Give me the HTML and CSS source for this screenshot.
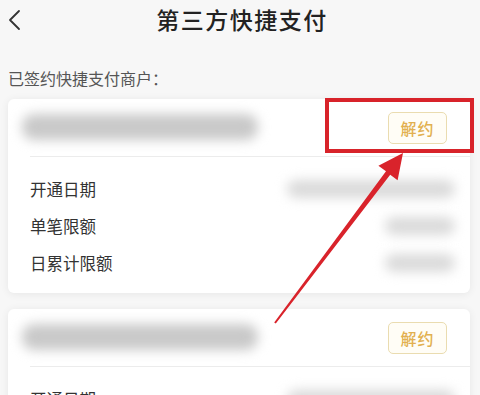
FILE: index.html
```html
<!DOCTYPE html>
<html lang="zh-CN">
<head>
    <meta charset="UTF-8">
    <meta name="viewport" content="width=device-width, initial-scale=1.0">
    <title>第三方快捷支付</title>
    <link rel="stylesheet" href="styles.css">
</head>
<body>
    <div class="page">
        <div class="nav">
            <svg class="back" width="14" height="22" viewBox="0 0 14 22">
                <polyline points="12,2 3,11 12,20" fill="none" stroke="#333" stroke-width="1.8" stroke-linecap="round" stroke-linejoin="round"/>
            </svg>
            <div class="title">第三方快捷支付</div>
        </div>

        <div class="subtitle">已签约快捷支付商户：</div>

        <div class="card">
            <div class="card-head">
                <div class="blur name"></div>
                <button class="btn-cancel">解约</button>
            </div>
            <div class="rows">
                <div class="row"><span>开通日期</span><div class="blur val wide"></div></div>
                <div class="row"><span>单笔限额</span><div class="blur val"></div></div>
                <div class="row"><span>日累计限额</span><div class="blur val"></div></div>
            </div>
        </div>

        <div class="card">
            <div class="card-head">
                <div class="blur name"></div>
                <button class="btn-cancel">解约</button>
            </div>
            <div class="rows">
                <div class="row"><span>开通日期</span><div class="blur val wide"></div></div>
                <div class="row"><span>单笔限额</span><div class="blur val"></div></div>
            </div>
        </div>

        <!-- annotation over the screenshot -->
        <div class="mark"></div>
        <svg class="arrow" width="480" height="395" viewBox="0 0 480 395">
            <polygon fill="#d9232b" points="274.2,322.4 386,171.2 378.4,165.8 403,153 397.6,180.2 390.2,174.8 275.8,323.6"/>
        </svg>
    </div>
</body>
</html>
```

FILE: styles.css
```css
body {
    margin: 0;
    background-color: #f7f7f7;
    font-family: "Noto Sans CJK SC", "Noto Sans", sans-serif;
    color: #333;
}

.page {
    position: relative;
    width: 480px;
    height: 395px;
    overflow: hidden;
}

.nav {
    position: relative;
    height: 38px;
    display: flex;
    align-items: center;
    justify-content: center;
}

.back {
    position: absolute;
    left: 7px;
    top: 9px;
}

.title {
    font-size: 23px;
    font-weight: 500;
    color: #222;
    letter-spacing: 1.5px;
    margin-left: 4px;
}

.subtitle {
    margin: 28px 0 0 8px;
    height: 25px;
    font-size: 16px;
    color: #555;
}

.card {
    margin: 8px 10px 16px 8px;
    background-color: #fff;
    border-radius: 6px;
    box-shadow: 0 1px 8px rgba(0, 0, 0, 0.07);
}

.card-head {
    display: flex;
    justify-content: space-between;
    align-items: center;
    height: 58px;
    padding: 0 23px 0 14px;
    box-sizing: border-box;
    position: relative;
}

.card-head::after {
    content: "";
    position: absolute;
    left: 22px;
    right: 0;
    bottom: 0;
    height: 1px;
    background-color: #ececec;
}

.blur {
    background-color: #c9c9c9;
    filter: blur(6px);
    border-radius: 12px;
}

.name {
    width: 236px;
    height: 26px;
    margin-top: -2px;
}

.btn-cancel {
    width: 59px;
    height: 32px;
    border: 1.5px solid #eadcb0;
    border-radius: 5px;
    background-color: #fffdf6;
    color: #e2b050;
    font-family: inherit;
    font-size: 16px;
    font-weight: 500;
    letter-spacing: 1px;
    padding: 0;
}

.rows {
    padding: 13px 15px 12px 22px;
}

.row {
    height: 37px;
    display: flex;
    justify-content: space-between;
    align-items: center;
    font-size: 16.5px;
}

.val {
    width: 70px;
    height: 18px;
    background-color: #dadada;
}

.val.wide {
    width: 168px;
}

.mark {
    position: absolute;
    left: 325px;
    top: 98px;
    width: 149px;
    height: 55px;
    box-sizing: border-box;
    border: 4px solid #d8232a;
}

.arrow {
    position: absolute;
    left: 0;
    top: 0;
}
```
